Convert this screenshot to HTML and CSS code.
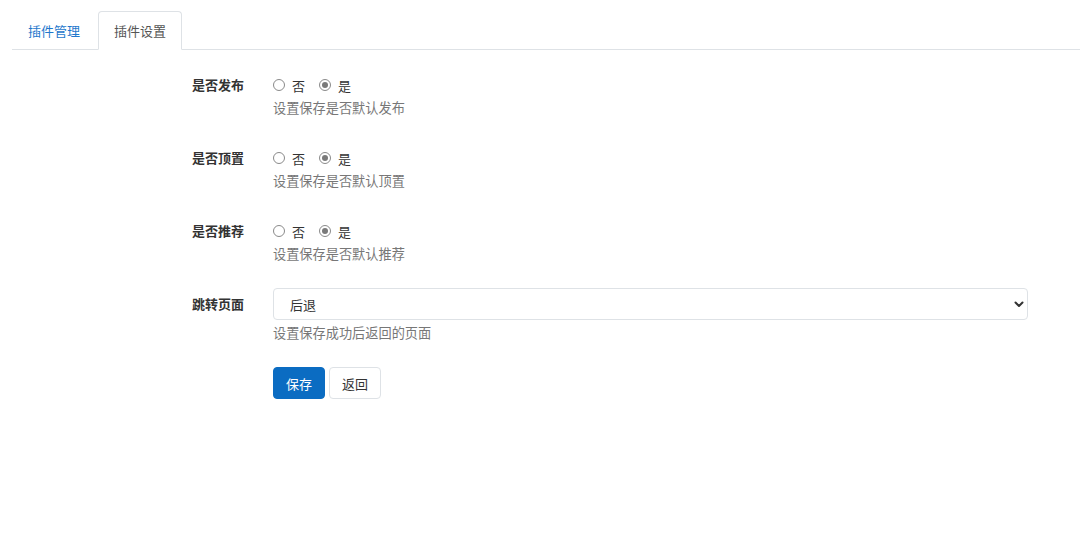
FILE: index.html
```html
<!DOCTYPE html>
<html lang="zh">
<head>
<meta charset="utf-8">
<title>插件设置</title>
<link rel="stylesheet" href="styles.css">
</head>
<body>
<div class="page">
  <nav class="tabs">
    <a class="tab" href="#">插件管理</a>
    <a class="tab active" href="#">插件设置</a>
  </nav>
  <form class="form">
    <div class="row">
      <div class="label">是否发布</div>
      <div class="field">
        <div class="radios">
          <label class="radio"><span class="dot"></span>否</label>
          <label class="radio"><span class="dot checked"></span>是</label>
        </div>
        <div class="help">设置保存是否默认发布</div>
      </div>
    </div>
    <div class="row">
      <div class="label">是否顶置</div>
      <div class="field">
        <div class="radios">
          <label class="radio"><span class="dot"></span>否</label>
          <label class="radio"><span class="dot checked"></span>是</label>
        </div>
        <div class="help">设置保存是否默认顶置</div>
      </div>
    </div>
    <div class="row row-last-radio">
      <div class="label">是否推荐</div>
      <div class="field">
        <div class="radios">
          <label class="radio"><span class="dot"></span>否</label>
          <label class="radio"><span class="dot checked"></span>是</label>
        </div>
        <div class="help">设置保存是否默认推荐</div>
      </div>
    </div>
    <div class="row row-select">
      <div class="label label-tall">跳转页面</div>
      <div class="field">
        <div class="select-wrap">
          <select class="select"><option>后退</option></select>
          <svg class="chevron" width="10" height="8" viewBox="0 0 10 8"><path d="M1.5 2.5 L5 6 L8.5 2.5" fill="none" stroke="#333" stroke-width="2" stroke-linecap="round" stroke-linejoin="round"/></svg>
        </div>
        <div class="help">设置保存成功后返回的页面</div>
      </div>
    </div>
    <div class="row">
      <div class="label"></div>
      <div class="field buttons">
        <button type="button" class="btn btn-primary">保存</button>
        <button type="button" class="btn btn-default">返回</button>
      </div>
    </div>
  </form>
</div>
</body>
</html>
```
FILE: styles.css
```css
* { box-sizing: border-box; }
body {
  margin: 0;
  background: #fff;
  font-family: "Noto Sans CJK SC", "Noto Sans", sans-serif;
  font-size: 13px;
  color: #333;
}
.page { padding-top: 11px; }
.tabs {
  display: flex;
  gap: 2px;
  margin-left: 12px;
  border-bottom: 1px solid #dee2e6;
}
.tab {
  display: block;
  height: 39px;
  line-height: 37px;
  padding: 0 15px;
  border: 1px solid transparent;
  border-radius: 4px 4px 0 0;
  margin-bottom: -1px;
  color: #1f78cc;
  text-decoration: none;
}
.tab.active {
  color: #555;
  background: #fff;
  border-color: #dee2e6 #dee2e6 #fff;
}
.form { margin-top: 25px; }
.row {
  display: flex;
  margin-left: 192px;
  margin-bottom: 30px;
}
.row-last-radio { margin-bottom: 24px; }
.row-select { margin-bottom: 24px; }
.label {
  width: 81px;
  flex: none;
  font-weight: bold;
  line-height: 20px;
  color: #333;
}
.label-tall { line-height: 32px; }
.field { display: flex; flex-direction: column; }
.radios {
  display: flex;
  align-items: center;
  height: 20px;
  gap: 14px;
}
.radio {
  display: flex;
  align-items: center;
  gap: 7px;
  color: #333;
}
.dot {
  width: 12px;
  height: 12px;
  border: 1px solid #8a8a8a;
  border-radius: 50%;
  background: #fff;
  position: relative;
}
.dot.checked::after {
  content: "";
  position: absolute;
  left: 2px; top: 2px;
  width: 6px; height: 6px;
  border-radius: 50%;
  background: #7a7a7a;
}
.help {
  margin-top: 3px;
  line-height: 20px;
  font-size: 13.2px;
  color: #777;
}
.select-wrap {
  position: relative;
  width: 755px;
}
.select {
  display: block;
  width: 100%;
  height: 32px;
  padding: 0 30px 0 16px;
  border: 1px solid #dee2e6;
  border-radius: 4px;
  background: #fff;
  font-family: inherit;
  font-size: 13px;
  color: #333;
  -webkit-appearance: none;
  appearance: none;
}
.chevron {
  position: absolute;
  right: 4px;
  top: 12px;
}
.buttons {
  flex-direction: row;
  gap: 4px;
}
.btn {
  height: 32px;
  padding: 0 12px;
  border-radius: 4px;
  font-family: inherit;
  font-size: 13px;
  cursor: pointer;
}
.btn-primary {
  background: #0b6cc2;
  border: 1px solid #0b6cc2;
  color: #fff;
}
.btn-default {
  background: #fff;
  border: 1px solid #dee2e6;
  color: #333;
}
```
